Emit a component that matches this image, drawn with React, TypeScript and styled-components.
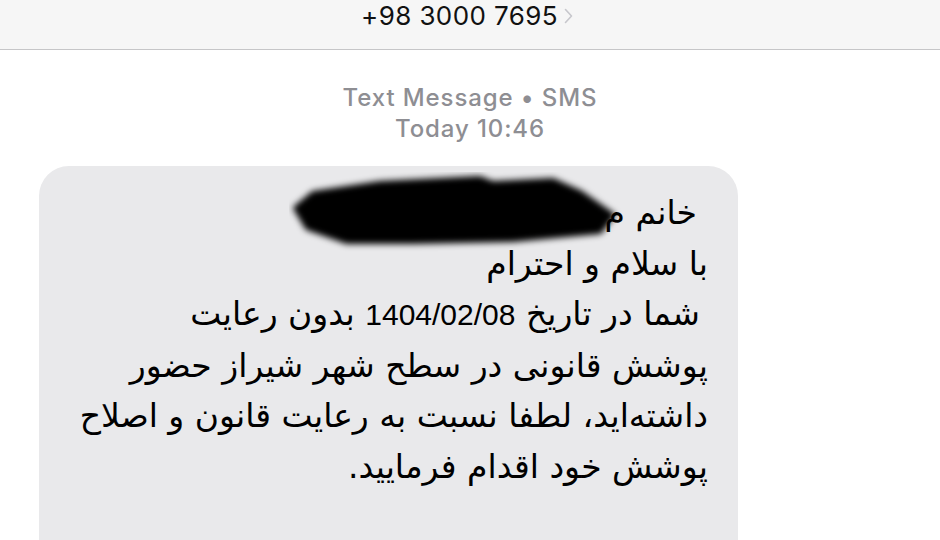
import React from "react";
import styled, { createGlobalStyle } from "styled-components";

const Global = createGlobalStyle`
  html, body { margin: 0; padding: 0; background: #ffffff; }
  body { width: 940px; height: 540px; overflow: hidden; }
  * { box-sizing: border-box; }
`;

const Page = styled.div`
  width: 940px;
  height: 540px;
  display: flex;
  flex-direction: column;
  background: #ffffff;
  overflow: hidden;
  font-family: Inter, "Liberation Sans", "DejaVu Sans", sans-serif;
`;

const Header = styled.header`
  height: 50px;
  flex: none;
  background: #f6f6f6;
  border-bottom: 1px solid #c6c6c8;
  display: flex;
  align-items: flex-start;
  justify-content: center;
  padding-top: 3px;
`;

const Phone = styled.div`
  display: flex;
  align-items: center;
  gap: 6px;
  margin-left: -6px;
  font-size: 26px;
  line-height: 25px;
  color: #111111;
  letter-spacing: 0.4px;
`;

const Chevron = styled.svg`
  width: 9px;
  height: 16px;
  margin-top: 1px;
`;

const Meta = styled.div`
  display: flex;
  flex-direction: column;
  align-items: center;
  margin-top: 32px;
  color: #8e8e93;
  font-size: 24px;
  line-height: 31px;
  font-weight: 500;
  letter-spacing: 0.9px;
`;

const Thread = styled.div`
  padding: 0 0 0 39px;
  margin-top: 22px;
`;

const Bubble = styled.div`
  position: relative;
  width: 699px;
  height: 420px;
  background: #e9e9eb;
  border-radius: 30px;
  padding: 22px 30px 0 30px;
  direction: rtl;
  font-family: "DejaVu Sans", sans-serif;
  font-size: 33px;
  line-height: 50.5px;
  color: #000000;
`;

const Line = styled.div<{ $indent?: number }>`
  white-space: nowrap;
  text-align: right;
  padding-right: ${(p) => p.$indent ?? 0}px;
`;

const Num = styled.span`
  font-family: "Liberation Sans", sans-serif;
  font-size: 30px;
`;

const Redaction = styled.svg`
  position: absolute;
  left: 250px;
  top: 6px;
  width: 340px;
  height: 90px;
  pointer-events: none;
`;

export default function App() {
  return (
    <>
      <Global />
      <Page>
        <Header>
          <Phone>
            <span>+98 3000 7695</span>
            <Chevron viewBox="0 0 9 16">
              <path d="M1.5 1.5 L7.5 8 L1.5 14.5" fill="none" stroke="#c7c7cc" strokeWidth="1.6" strokeLinecap="round" strokeLinejoin="round" />
            </Chevron>
          </Phone>
        </Header>
        <Meta>
          <span>Text Message • SMS</span>
          <span>Today 10:46</span>
        </Meta>
        <Thread>
          <Bubble>
            <Line $indent={11}>خانم م</Line>
            <Line>با سلام و احترام</Line>
            <Line $indent={8}>
              شما در تاریخ <Num>1404/02/08</Num> بدون رعایت
            </Line>
            <Line>پوشش قانونی در سطح شهر شیراز حضور</Line>
            <Line>داشته‌اید، لطفا نسبت به رعایت قانون و اصلاح</Line>
            <Line>پوشش خود اقدام فرمایید.</Line>
            <Redaction viewBox="0 0 340 90">
              <defs>
                <filter id="blur" x="-10%" y="-30%" width="120%" height="160%">
                  <feGaussianBlur stdDeviation="3" />
                </filter>
              </defs>
              <path
                d="M6 36 L24 21 L91 11 L191 6 L204 11 L264 8 L291 20 L324 43 L311 60 L224 68 L124 70 L58 70 L18 56 Z"
                fill="#000"
                stroke="#000"
                strokeWidth="4"
                strokeLinejoin="round"
                filter="url(#blur)"
              />
            </Redaction>
          </Bubble>
        </Thread>
      </Page>
    </>
  );
}
